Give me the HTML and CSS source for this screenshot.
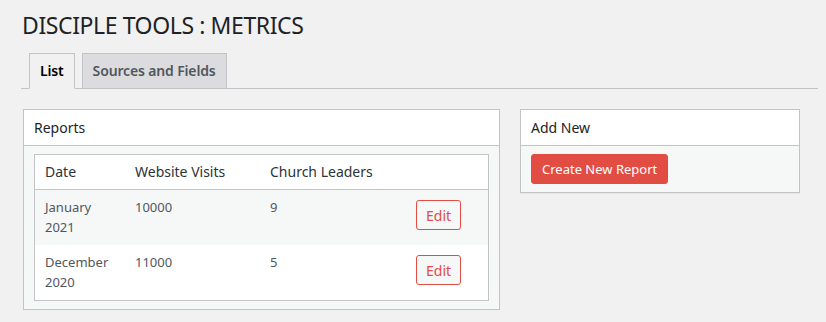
FILE: index.html
```html
<!DOCTYPE html>
<html lang="en">
<head>
  <meta charset="UTF-8">
  <meta name="viewport" content="width=device-width, initial-scale=1.0">
  <title>Disciple Tools : Metrics</title>
  <link rel="stylesheet" href="styles.css">
</head>
<body>
  <div class="wrap">
    <h1>DISCIPLE TOOLS : METRICS</h1>

    <nav class="nav-tabs">
      <a href="#" class="nav-tab active">List</a>
      <a href="#" class="nav-tab">Sources and Fields</a>
    </nav>

    <div class="columns">
      <div class="postbox reports">
        <h2>Reports</h2>
        <div class="inside">
          <table class="widefat">
            <thead>
              <tr>
                <th class="col-date">Date</th>
                <th class="col-visits">Website Visits</th>
                <th class="col-leaders">Church Leaders</th>
                <th></th>
              </tr>
            </thead>
            <tbody id="report-rows"></tbody>
          </table>
        </div>
      </div>

      <div class="postbox add-new">
        <h2>Add New</h2>
        <div class="inside">
          <button class="btn-primary">Create New Report</button>
        </div>
      </div>
    </div>
  </div>

  <script>
    const reports = [
      { date: "January 2021", visits: 10000, leaders: 9 },
      { date: "December 2020", visits: 11000, leaders: 5 }
    ];

    const rows = document.getElementById("report-rows");
    reports.forEach((r, i) => {
      const tr = document.createElement("tr");
      if (i % 2 === 0) tr.className = "alt";
      tr.innerHTML = `
        <td>${r.date.replace(" ", "<br>")}</td>
        <td>${r.visits}</td>
        <td>${r.leaders}</td>
        <td><button class="btn-edit">Edit</button></td>
      `;
      rows.appendChild(tr);
    });
  </script>
</body>
</html>
```

FILE: styles.css
```css
body {
  margin: 0;
  background: #f1f1f1;
  color: #3c434a;
  font-family: "Noto Sans", sans-serif;
  font-size: 13px;
}

.wrap {
  padding: 10px 0 0 22px;
  margin-right: 8px;
}

h1 {
  margin: 0;
  font-size: 23px;
  font-weight: 400;
  line-height: 30px;
  letter-spacing: -0.4px;
  color: #1d2327;
}

.nav-tabs {
  display: flex;
  margin-top: 13px;
  margin-left: -1px;
  padding-left: 8px;
  border-bottom: 1px solid #c3c4c7;
}

.nav-tab {
  display: block;
  margin-right: 7px;
  margin-bottom: -1px;
  padding: 5px 10px;
  border: 1px solid #c3c4c7;
  background: #dcdcde;
  color: #50575e;
  font-size: 14px;
  font-weight: 600;
  line-height: 24px;
  letter-spacing: -0.15px;
  text-decoration: none;
}

.nav-tab.active {
  background: #f1f1f1;
  border-bottom-color: #f1f1f1;
  color: #000;
}

.columns {
  display: flex;
  gap: 20px;
  margin-top: 20px;
  align-items: flex-start;
}

.postbox {
  background: #f6f7f7;
  border: 1px solid #c3c4c7;
  box-shadow: 0 1px 1px rgba(0,0,0,0.04);
}

.reports {
  width: 475px;
  margin-left: 1px;
}

.add-new {
  width: 278px;
}

.postbox h2 {
  margin: 0;
  padding: 8px 10px;
  background: #fff;
  border-bottom: 1px solid #c3c4c7;
  font-size: 14px;
  font-weight: 400;
  line-height: 19px;
  color: #1d2327;
}

.inside {
  padding: 8px 10px;
}

.widefat {
  width: 100%;
  border-collapse: collapse;
  border: 1px solid #c3c4c7;
  background: #fff;
}

.widefat th {
  text-align: left;
  font-weight: 400;
  font-size: 14px;
  padding: 8px 10px;
  line-height: 18px;
  color: #2c3338;
  border-bottom: 1px solid #c3c4c7;
}

.widefat td {
  vertical-align: top;
  padding: 8px 10px;
  line-height: 19.5px;
  color: #50575e;
}

.col-date { width: 70px; }
.col-visits { width: 115px; }
.col-leaders { width: 126px; }

tr.alt {
  background: #f6f7f7;
}

.btn-edit {
  margin-top: 2px;
  height: 30px;
  padding: 0 9px;
  border: 1px solid #e14d43;
  border-radius: 3px;
  background: #f6f7f7;
  color: #e14d43;
  font-family: inherit;
  font-size: 14px;
}

.btn-primary {
  display: block;
  height: 30px;
  padding: 0 10px;
  border: 1px solid #e14d43;
  border-radius: 3px;
  background: #e14d43;
  color: #fff;
  font-family: inherit;
  font-size: 13px;
}
```
